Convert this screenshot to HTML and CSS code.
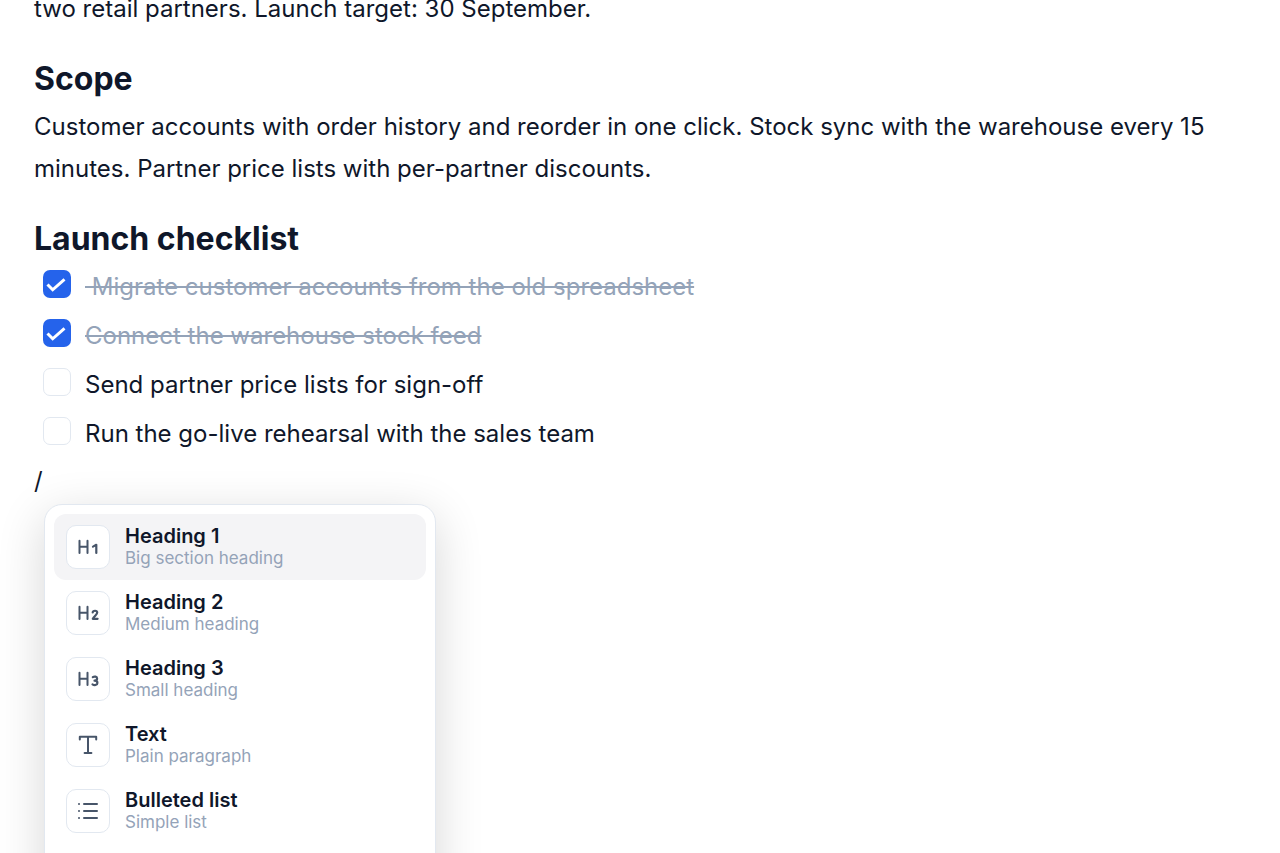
FILE: index.html
```html
<!DOCTYPE html>
<html lang="en">
<head>
    <meta charset="UTF-8">
    <meta name="viewport" content="width=device-width, initial-scale=1.0">
    <title>Launch plan</title>
    <link rel="stylesheet" href="styles.css">
</head>
<body>
    <main class="editor">
        <p>two retail partners. Launch target: 30 September.</p>

        <h2>Scope</h2>
        <p>Customer accounts with order history and reorder in one click. Stock sync with the warehouse every 15 minutes. Partner price lists with per-partner discounts.</p>

        <h2>Launch checklist</h2>
        <ul class="tasks">
            <li>
                <input type="checkbox" id="task1" checked>
                <label for="task1">&nbsp;Migrate customer accounts from the old spreadsheet</label>
            </li>
            <li>
                <input type="checkbox" id="task2" checked>
                <label for="task2">Connect the warehouse stock feed</label>
            </li>
            <li>
                <input type="checkbox" id="task3">
                <label for="task3">Send partner price lists for sign-off</label>
            </li>
            <li>
                <input type="checkbox" id="task4">
                <label for="task4">Run the go-live rehearsal with the sales team</label>
            </li>
        </ul>

        <div class="command">
            <p>/</p>
            <div class="menu">
                <button type="button" class="menu-item active">
                    <span class="icon">
                        <svg viewBox="0 0 24 24"><path d="M3.5 5.8v12.2M11.5 5.8v12.2M3.5 11.8h8"/><path class="digit" d="M17 11.6l3.3-1.8v8.2"/></svg>
                    </span>
                    <span class="text">
                        <span class="name">Heading 1</span>
                        <span class="hint">Big section heading</span>
                    </span>
                </button>
                <button type="button" class="menu-item">
                    <span class="icon">
                        <svg viewBox="0 0 24 24"><path d="M3.5 5.8v12.2M11.5 5.8v12.2M3.5 11.8h8"/><path class="digit" d="M16.7 11.5c.2-2.3 4.5-2.4 4.5.1 0 2.2-2.8 3.3-4.4 6.2h4.8"/></svg>
                    </span>
                    <span class="text">
                        <span class="name">Heading 2</span>
                        <span class="hint">Medium heading</span>
                    </span>
                </button>
                <button type="button" class="menu-item">
                    <span class="icon">
                        <svg viewBox="0 0 24 24"><path d="M3.5 5.8v12.2M11.5 5.8v12.2M3.5 11.8h8"/><path class="digit" d="M16.8 10.2c1.6-1.1 4.3-.8 4.3 1.3 0 1.5-1.2 2.2-2.6 2.2 1.6 0 2.9.8 2.9 2.2 0 2.4-3.2 2.6-4.9 1.4"/></svg>
                    </span>
                    <span class="text">
                        <span class="name">Heading 3</span>
                        <span class="hint">Small heading</span>
                    </span>
                </button>
                <button type="button" class="menu-item">
                    <span class="icon">
                        <svg viewBox="0 0 24 24"><path d="M3.8 6.6V3.8h16.4v2.8M8.6 20h6.8M12 3.8V20"/></svg>
                    </span>
                    <span class="text">
                        <span class="name">Text</span>
                        <span class="hint">Plain paragraph</span>
                    </span>
                </button>
                <button type="button" class="menu-item">
                    <span class="icon">
                        <svg viewBox="0 0 24 24"><path d="M8 5h13M8 12h13M8 19h13M3 5h.01M3 12h.01M3 19h.01"/></svg>
                    </span>
                    <span class="text">
                        <span class="name">Bulleted list</span>
                        <span class="hint">Simple list</span>
                    </span>
                </button>
            </div>
        </div>
    </main>
</body>
</html>
```

FILE: styles.css
```css
* {
    box-sizing: border-box;
}
body {
    margin: 0;
    height: 100vh;
    overflow: hidden;
    background-color: #fff;
    color: #0f172a;
    font-family: Inter, sans-serif;
    font-size: 24px;
    line-height: 42px;
}
.editor {
    margin-top: -12px;
    padding: 0 34px;
}
p {
    margin: 0;
}
h2 {
    margin: 28px 0 6px;
    font-size: 32px;
    line-height: 42px;
    font-weight: 700;
}
.tasks {
    display: flex;
    flex-direction: column;
    gap: 7px;
    margin: 0 0 5px;
    padding: 0 0 0 9px;
    list-style: none;
}
.tasks li {
    display: flex;
    gap: 14px;
}
.tasks input {
    appearance: none;
    flex: none;
    width: 28px;
    height: 28px;
    margin: 4px 0 0;
    border: 1px solid #e2e8f0;
    border-radius: 7px;
    background-color: #fff;
}
.tasks input:checked {
    border: none;
    background: #2563eb url("data:image/svg+xml,%3Csvg xmlns='http://www.w3.org/2000/svg' viewBox='0 0 28 28' fill='none' stroke='white' stroke-width='3'%3E%3Cpath d='M4.5 14.5l5.2 5.3L21.5 9.3'/%3E%3C/svg%3E") center / 28px 28px no-repeat;
}
.tasks input:checked + label {
    color: #94a3b8;
    text-decoration: line-through;
}
.command {
    position: relative;
}
.menu {
    position: absolute;
    top: 44px;
    left: 10px;
    width: 392px;
    padding: 9px 9px 48px;
    border: 1px solid #e2e8f0;
    border-radius: 18px;
    background-color: #fff;
    box-shadow: 0 12px 48px rgba(0, 0, 0, 0.16);
}
.menu-item {
    display: flex;
    align-items: center;
    gap: 15px;
    width: 100%;
    padding: 11px 12px;
    border: none;
    border-radius: 12px;
    background: none;
    color: inherit;
    font-family: inherit;
    text-align: left;
    cursor: pointer;
}
.menu-item.active {
    background-color: #f4f4f6;
}
.icon {
    display: flex;
    align-items: center;
    justify-content: center;
    width: 44px;
    height: 44px;
    border: 1px solid #e2e8f0;
    border-radius: 10px;
    background-color: #fff;
}
.icon svg {
    width: 24px;
    height: 24px;
    fill: none;
    stroke: #475569;
    stroke-width: 2;
    stroke-linecap: round;
    stroke-linejoin: round;
}
.icon .digit {
    stroke-width: 2.2;
}
.name,
.hint {
    display: block;
    line-height: 22px;
}
.name {
    font-size: 20px;
    font-weight: 600;
}
.hint {
    color: #94a3b8;
    font-size: 17px;
}
```
